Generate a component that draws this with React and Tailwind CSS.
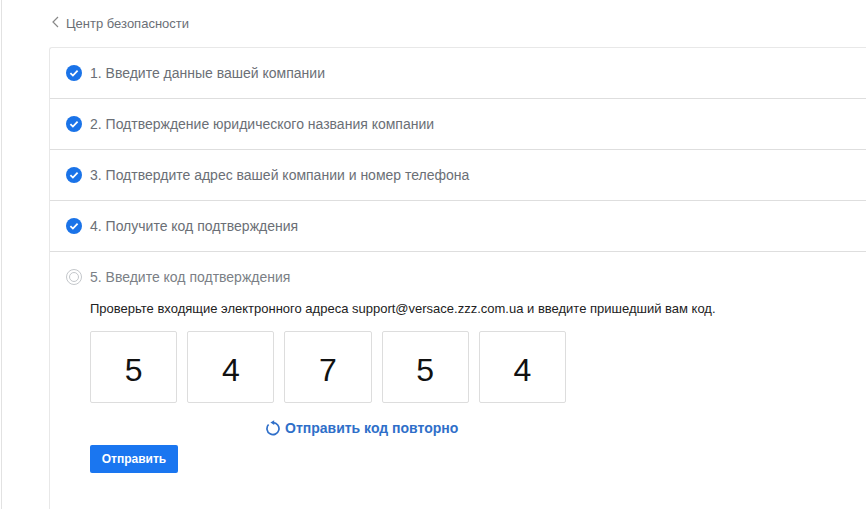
import React from 'react';

const steps = [
    '1. Введите данные вашей компании',
    '2. Подтверждение юридического названия компании',
    '3. Подтвердите адрес вашей компании и номер телефона',
    '4. Получите код подтверждения',
];

const code = ['5', '4', '7', '5', '4'];

function CheckIcon() {
    return (
        <svg width="16" height="16" viewBox="0 0 16 16" className="shrink-0">
            <circle cx="8" cy="8" r="8" fill="#1a73e8" />
            <path d="M4.4 8.2l2.5 2.4 4.7-4.9" fill="none" stroke="#fff" strokeWidth="1.8" />
        </svg>
    );
}

function PendingIcon() {
    return (
        <svg width="16" height="16" viewBox="0 0 16 16" className="shrink-0">
            <circle cx="8" cy="8" r="7.5" fill="none" stroke="#c4c7cb" />
            <circle cx="8" cy="8" r="4.5" fill="none" stroke="#c4c7cb" />
        </svg>
    );
}

function ResendIcon() {
    return (
        <svg width="16" height="16" viewBox="0 0 16 16" className="shrink-0">
            <path d="M8 2.6a6 6 0 1 1-4.4 1.9" fill="none" stroke="#2f6fc9" strokeWidth="1.7" />
            <path d="M9.2 0.2v4.8L5.4 2.6z" fill="#2f6fc9" />
        </svg>
    );
}

export default function App() {
    return (
        <div className="h-[509px] w-[866px] overflow-hidden bg-white font-['Liberation_Sans',Arial,sans-serif]">
            <div className="ml-[1px] h-full border-l border-[#e2e2e2] pl-[47px]">
                <div className="flex h-[47px] items-center pl-[2px] text-[13px] text-[#6b6f76]">
                    <svg width="9" height="12" viewBox="0 0 9 12" className="mb-[3px] mr-[6px]">
                        <path d="M7 1L2 6l5 5" fill="none" stroke="#888" strokeWidth="1.2" />
                    </svg>
                    Центр безопасности
                </div>
                <div className="h-[470px] rounded-tl-[3px] border-t border-l border-[#e8e8e8]">
                    {steps.map((step) => (
                        <div key={step} className="flex h-[51px] items-center gap-2 border-b border-[#dedede] pl-4 text-sm text-[#6b6f76]">
                            <CheckIcon />
                            {step}
                        </div>
                    ))}
                    <div className="pl-4">
                        <div className="flex h-[50px] items-center gap-2 text-sm text-[#7b7f86]">
                            <PendingIcon />
                            5. Введите код подтверждения
                        </div>
                        <div className="pl-6">
                            <p className="text-[13px] leading-[14px] text-[#222]">
                                Проверьте входящие электронного адреса support@versace.zzz.com.ua и введите пришедший вам код.
                            </p>
                            <div className="mt-[15px] flex gap-[10px]">
                                {code.map((digit, i) => (
                                    <div key={i} className="flex h-[72px] w-[87.2px] items-center justify-center rounded-[2px] border border-[#dddddd] pt-[6px] text-[32px] text-[#111]">
                                        {digit}
                                    </div>
                                ))}
                            </div>
                            <div className="mt-[15px] flex items-center gap-1 pl-[175px] text-sm font-bold text-[#2f6fc9]">
                                <ResendIcon />
                                Отправить код повторно
                            </div>
                            <button className="mt-[7px] flex h-[28px] w-[88px] items-center justify-center rounded-[2px] bg-[#1a76f0] text-xs font-bold text-white">
                                Отправить
                            </button>
                        </div>
                    </div>
                </div>
            </div>
        </div>
    );
}
